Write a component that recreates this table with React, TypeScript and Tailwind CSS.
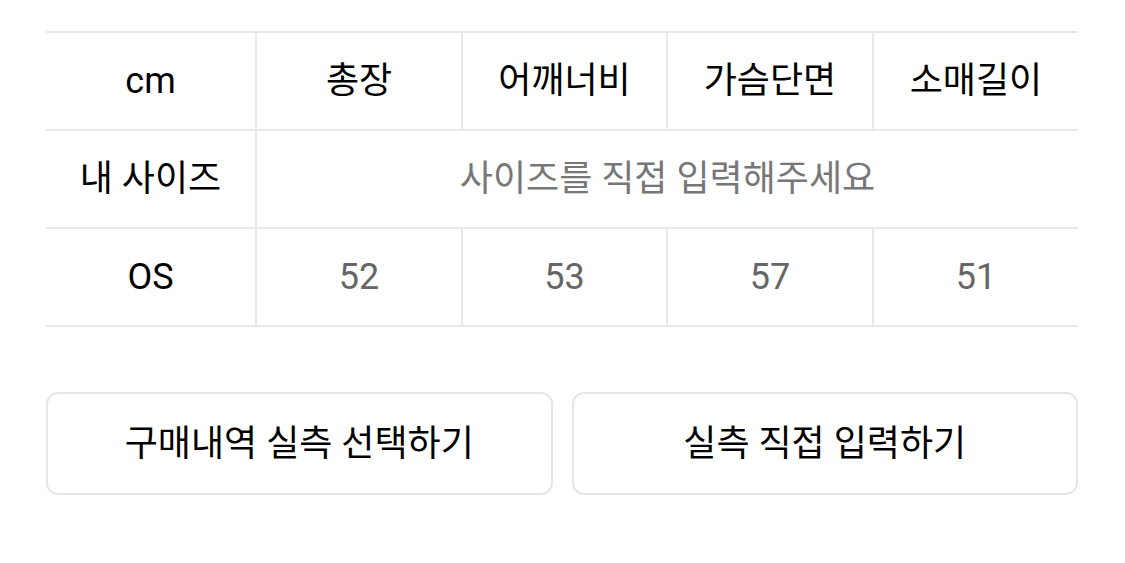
const COLS = ["총장", "어깨너비", "가슴단면", "소매길이"];
const OS = ["52", "53", "57", "51"];

const font = { fontFamily: '"Roboto", "Noto Sans CJK KR", sans-serif' };

function Cell({ children, last, className = "" }: { children: React.ReactNode; last?: boolean; className?: string }) {
  return (
    <div
      className={`h-[98px] flex items-center justify-center border-b-2 border-[#e8e8e8] ${last ? "" : "border-r-2"} ${className}`}
    >
      {children}
    </div>
  );
}

export default function App() {
  return (
    <div className="w-[1125px] h-[563px] bg-white px-[46px] pt-[31px]" style={font}>
      {/* size table */}
      <div className="w-[1032px] overflow-hidden border-t-2 border-[#e8e8e8] grid grid-cols-[211px_206px_205px_206px_204px] text-[36px]">
        <Cell className="text-black">cm</Cell>
        {COLS.map((c, i) => (
          <Cell key={c} last={i === 3} className="text-black">
            {c}
          </Cell>
        ))}

        <Cell className="text-black">내 사이즈</Cell>
        <div className="col-span-4 h-[98px] flex items-center justify-center border-b-2 border-[#e8e8e8] text-[#777]">
          사이즈를 직접 입력해주세요
        </div>

        <Cell className="text-black">OS</Cell>
        {OS.map((v, i) => (
          <Cell key={i} last={i === 3} className="text-[#666]">
            {v}
          </Cell>
        ))}
      </div>

      {/* actions */}
      <div className="w-[1032px] mt-[65px] grid grid-cols-2 gap-[19px]">
        <button className="h-[103px] rounded-[12px] border-2 border-[#e6e6e6] bg-white text-[36px] text-black">
          구매내역 실측 선택하기
        </button>
        <button className="h-[103px] rounded-[12px] border-2 border-[#e6e6e6] bg-white text-[36px] text-black">
          실측 직접 입력하기
        </button>
      </div>
    </div>
  );
}
